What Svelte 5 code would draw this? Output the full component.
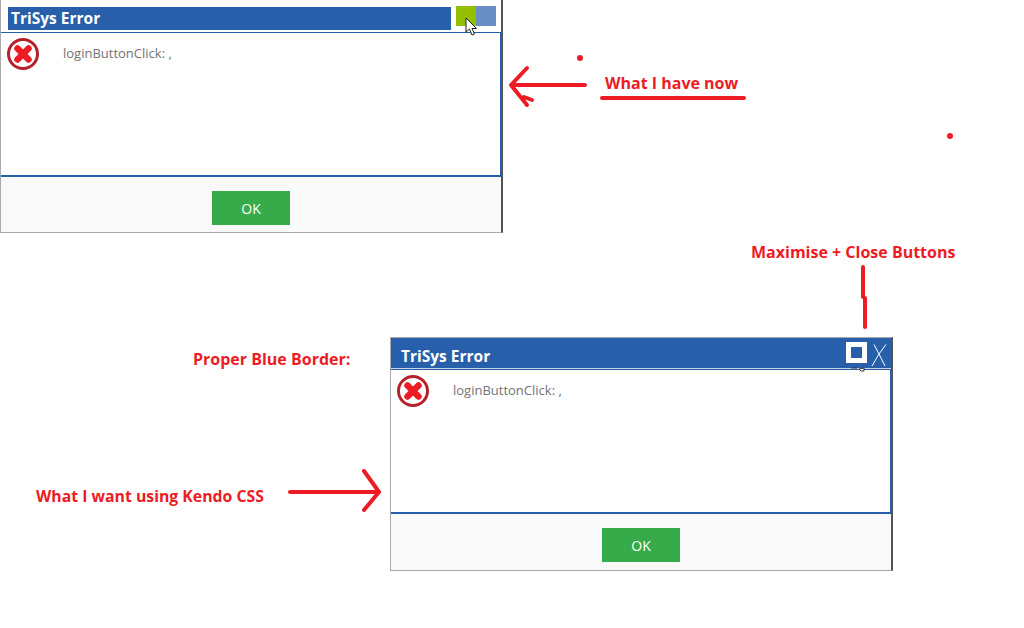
<script>
	const dialogs = [
		{ id: 'now', message: 'loginButtonClick: ,' },
		{ id: 'want', message: 'loginButtonClick: ,' },
	]

	const notes = [
		{ id: 'have', text: 'What I have now' },
		{ id: 'buttons', text: 'Maximise + Close Buttons' },
		{ id: 'border', text: 'Proper Blue Border:' },
		{ id: 'kendo', text: 'What I want using Kendo CSS' },
	]

	// hand drawn red marks on top of the screenshot
	const strokes = [
		'M585 85H511M511 85L527 68M511 85L527 105M524 97L532 100',
		'M602 98H744',
		'M863 267V297M865 298V327',
		'M290 492H379M379 492L364 471M379 492L364 510',
	]
	const dots = [
		[580, 58],
		[950, 136],
	]
</script>

{#snippet cursor()}
	<svg class="cursor" width="14" height="20" viewBox="0 0 14 20">
		<path d="M1 1V15L4.5 12L7 18L9.5 17L7 11.5H11.5Z" fill="#fff" stroke="#222" stroke-width="1" />
	</svg>
{/snippet}

{#snippet errorIcon()}
	<svg class="icon" width="34" height="34" viewBox="0 0 34 34">
		<circle cx="17" cy="17" r="14.5" fill="#fff" stroke="#b3212b" stroke-width="3" />
		<path d="M11.5 11.5L22.5 22.5M22.5 11.5L11.5 22.5" stroke="#ed1c24" stroke-width="6.5" stroke-linecap="round" />
	</svg>
{/snippet}

{#snippet okFooter()}
	<div class="footer">
		<button class="ok">OK</button>
	</div>
{/snippet}

<div class="canvas">
	<section class="dialog now">
		<header class="titlerow">
			<h2>TriSys Error</h2>
			<div class="flat-buttons">
				<span class="green"></span>
				<span class="pale"></span>
				{@render cursor()}
			</div>
		</header>
		<div class="content">
			{@render errorIcon()}
			<p>{dialogs[0].message}</p>
		</div>
		{@render okFooter()}
	</section>

	<section class="dialog want">
		<header class="titlerow">
			<h2>TriSys Error</h2>
			<div class="kendo-buttons">
				<span class="maximise"></span>
				<svg class="close" width="18" height="24" viewBox="0 0 18 24">
					<path d="M3 1.5L8 11L15 1.5M8 11L14 23M8 11L1 23" fill="none" stroke="#fff" stroke-width="1" />
				</svg>
				<svg class="stub" width="16" height="5" viewBox="0 0 16 5">
					<path d="M1 1H7M9 2L14 1V4H11Z" fill="#fff" stroke="#333" stroke-width="1" />
				</svg>
			</div>
		</header>
		<div class="content">
			{@render errorIcon()}
			<p>{dialogs[1].message}</p>
		</div>
		{@render okFooter()}
	</section>

	<svg class="marks" width="1024" height="628" viewBox="0 0 1024 628">
		{#each strokes as d}
			<path {d} fill="none" stroke="#ed1c24" stroke-width="4" stroke-linecap="round" stroke-linejoin="round" />
		{/each}
		{#each dots as [cx, cy]}
			<circle {cx} {cy} r="3" fill="#ed1c24" />
		{/each}
	</svg>

	{#each notes as note (note.id)}
		<div class="note {note.id}">{note.text}</div>
	{/each}
</div>

<style>
	:global(body) {
		background: #fff;
	}

	.canvas {
		position: relative;
		width: 1024px;
		height: 628px;
		overflow: hidden;
		background: #fff;
		font-family: "Open Sans", sans-serif;
	}

	.dialog {
		position: absolute;
		display: flex;
		flex-direction: column;
		box-sizing: border-box;
		width: 503px;
		height: 234px;
		border-top: 1px solid #a9a9a9;
		border-left: 1px solid #a9a9a9;
		border-bottom: 1px solid #a9a9a9;
		border-right: 2px solid #555;
		background: #fff;
	}

	.now {
		left: 0;
		top: -1px;
	}

	.want {
		left: 390px;
		top: 337px;
	}

	.titlerow {
		display: flex;
		align-items: stretch;
		box-sizing: border-box;
		height: 32px;
		flex: none;
	}

	h2 {
		margin: 0;
		color: #fff;
		font-size: 15.5px;
		font-weight: 700;
		line-height: 24px;
		background: #275fab;
	}

	.now .titlerow {
		padding: 7px 5px 2px 7px;
		background: #fff;
		gap: 5px;
	}

	.now h2 {
		flex: 1;
		height: 23px;
		padding-left: 3px;
		line-height: 23px;
	}

	.flat-buttons {
		position: relative;
		display: flex;
		margin-top: -1px;
		height: 20px;
	}

	.flat-buttons span {
		display: block;
		width: 20px;
		height: 20px;
	}

	.green {
		background: #95c000;
	}

	.pale {
		background: #6a8fc6;
	}

	.cursor {
		position: absolute;
		left: 9px;
		top: 11px;
	}

	.want .titlerow {
		height: 31px;
		background: #275fab;
		border-bottom: 1px solid #c9d3e2;
		justify-content: space-between;
	}

	.want h2 {
		padding-left: 10px;
		line-height: 37px;
	}

	.kendo-buttons {
		position: relative;
		display: flex;
		align-items: flex-start;
		gap: 4px;
		padding: 4px 2px 0 0;
	}

	.maximise {
		display: block;
		box-sizing: border-box;
		width: 21px;
		height: 21px;
		border: 5px solid #fff;
		background: #275fab;
	}

	.close {
		margin-top: 1px;
	}

	.stub {
		position: absolute;
		left: 4px;
		top: 29px;
	}

	.content {
		display: flex;
		align-items: flex-start;
		box-sizing: border-box;
		height: 145px;
		flex: none;
		padding: 4px 0 0 5px;
		border-top: 1px solid #275fab;
		border-right: 1px solid #275fab;
		border-bottom: 2px solid #275fab;
	}

	.icon {
		flex: none;
	}

	.content p {
		margin: 0;
		padding: 7px 0 0 23px;
		color: #737373;
		font-size: 13px;
		line-height: 18px;
	}

	.footer {
		display: flex;
		justify-content: center;
		flex: 1;
		padding-top: 14px;
		padding-right: 1px;
		background: #f9f9f9;
	}

	.ok {
		width: 78px;
		height: 34px;
		padding: 0 0 0 1px;
		border: 0;
		background: #37ab4a;
		color: #fff;
		font-family: inherit;
		font-size: 14px;
	}

	.marks {
		position: absolute;
		left: 0;
		top: 0;
		pointer-events: none;
	}

	.note {
		position: absolute;
		color: #ed1c24;
		font-size: 16px;
		font-weight: 700;
		line-height: 22px;
		white-space: nowrap;
	}

	.have {
		left: 605px;
		top: 72px;
	}

	.buttons {
		left: 751px;
		top: 241px;
	}

	.border {
		left: 193px;
		top: 348px;
	}

	.kendo {
		left: 36px;
		top: 485px;
		font-size: 15.8px;
	}
</style>
